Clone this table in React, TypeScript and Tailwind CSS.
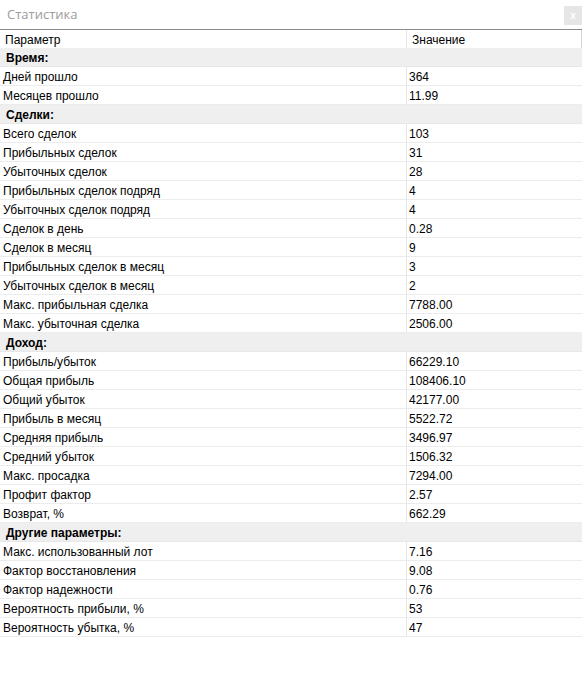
import React from "react";

type Row = { s?: string; k?: string; v?: string };

const rows: Row[] = [
  { s: "Время:" },
  { k: "Дней прошло", v: "364" },
  { k: "Месяцев прошло", v: "11.99" },
  { s: "Сделки:" },
  { k: "Всего сделок", v: "103" },
  { k: "Прибыльных сделок", v: "31" },
  { k: "Убыточных сделок", v: "28" },
  { k: "Прибыльных сделок подряд", v: "4" },
  { k: "Убыточных сделок подряд", v: "4" },
  { k: "Сделок в день", v: "0.28" },
  { k: "Сделок в месяц", v: "9" },
  { k: "Прибыльных сделок в месяц", v: "3" },
  { k: "Убыточных сделок в месяц", v: "2" },
  { k: "Макс. прибыльная сделка", v: "7788.00" },
  { k: "Макс. убыточная сделка", v: "2506.00" },
  { s: "Доход:" },
  { k: "Прибыль/убыток", v: "66229.10" },
  { k: "Общая прибыль", v: "108406.10" },
  { k: "Общий убыток", v: "42177.00" },
  { k: "Прибыль в месяц", v: "5522.72" },
  { k: "Средняя прибыль", v: "3496.97" },
  { k: "Средний убыток", v: "1506.32" },
  { k: "Макс. просадка", v: "7294.00" },
  { k: "Профит фактор", v: "2.57" },
  { k: "Возврат, %", v: "662.29" },
  { s: "Другие параметры:" },
  { k: "Макс. использованный лот", v: "7.16" },
  { k: "Фактор восстановления", v: "9.08" },
  { k: "Фактор надежности", v: "0.76" },
  { k: "Вероятность прибыли, %", v: "53" },
  { k: "Вероятность убытка, %", v: "47" },
];

export default function App() {
  return (
    <div
      className="w-[582px] h-[699px] bg-white text-black"
      style={{ fontFamily: '"Liberation Sans", Arial, sans-serif' }}
    >
      <div className="h-[30px] flex items-start justify-between border-b border-[#8c8c8c]">
        <div
          className="pl-[7px] pt-[5px] text-[13px] text-[#9c9c9c] leading-[18px]"
          style={{ fontFamily: '"Open Sans", "Noto Sans", sans-serif' }}
        >
          Статистика
        </div>
        <div className="mt-[6px] w-[18px] h-[19px] bg-[#e6e6e6] flex items-center justify-center text-white text-[10px] font-bold leading-none">
          x
        </div>
      </div>
      <div className="flex h-[18px] text-[12px] leading-[20px] border-r border-[#d4d4d4]">
        <div className="w-[407px] pl-[5px] border-r border-[#e6e6e6]">Параметр</div>
        <div className="flex-1 pl-[5px]">Значение</div>
      </div>
      {rows.map((r, i) =>
        r.s ? (
          <div
            key={i}
            className="h-[19px] bg-[#efefef] border-b border-[#e8e8e8] pl-[6px] text-[12px] font-bold leading-[20px]"
          >
            {r.s}
          </div>
        ) : (
          <div
            key={i}
            className="h-[19px] flex border-b border-[#ececec] text-[12px] leading-[20px]"
          >
            <div className="w-[407px] h-[18px] pl-[3px] border-r border-[#e6e6e6]">{r.k}</div>
            <div className="flex-1 pl-[2px]">{r.v}</div>
          </div>
        )
      )}
    </div>
  );
}
